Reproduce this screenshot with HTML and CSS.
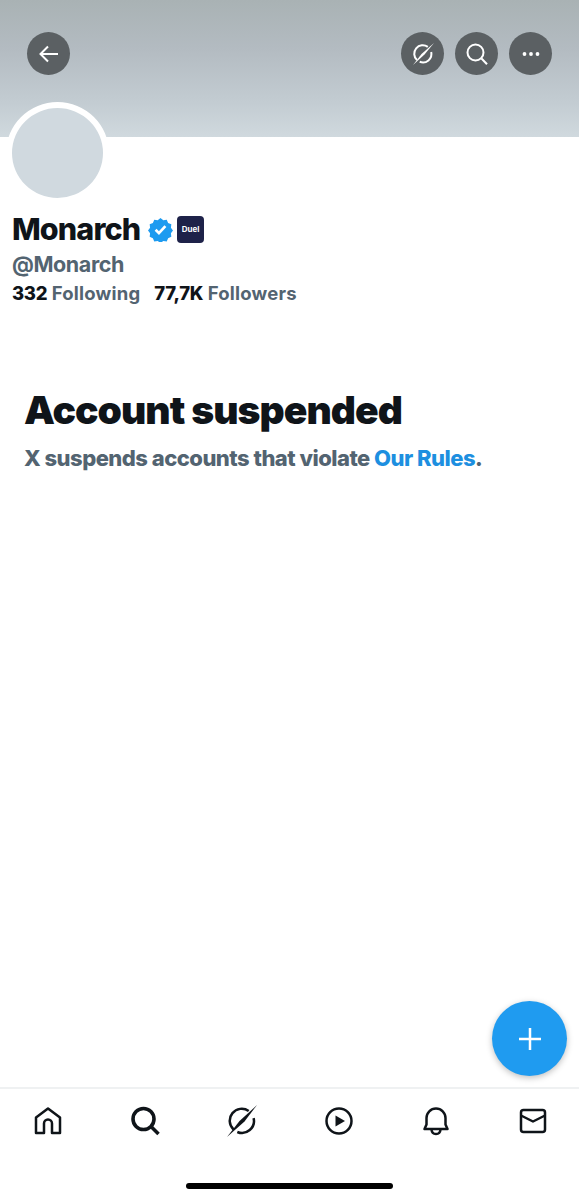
FILE: index.html
```html
<!DOCTYPE html>
<html lang="en">
<head>
<meta charset="utf-8">
<title>Monarch</title>
<link rel="stylesheet" href="styles.css">
</head>
<body>
<div class="page">
  <header class="banner">
    <button class="round" aria-label="Back">
      <svg width="24" height="24" viewBox="0 0 24 24" class="stroke-white"><path d="M21 12H4M11 4.500L3.500 12l7.500 7.500"/></svg>
    </button>
    <div class="actions">
      <button class="round" aria-label="Grok">
        <svg width="26" height="26" viewBox="0 0 26 26" class="stroke-white"><path d="M17.800 5.900A8.500 8.500 0 0 0 7 19M9.700 20.800A8.500 8.500 0 0 0 21.200 11"/><path class="slash" d="M3 24 11.500 13 24 2 14.500 13.500z"/></svg>
      </button>
      <button class="round" aria-label="Search">
        <svg width="24" height="24" viewBox="0 0 24 24" class="stroke-white"><circle cx="10.500" cy="10.500" r="8"/><path d="m16.500 16.500 5.500 5.800"/></svg>
      </button>
      <button class="round" aria-label="More">
        <svg width="24" height="24" viewBox="0 0 24 24" class="fill-white"><circle cx="5.500" cy="12" r="1.900"/><circle cx="12" cy="12" r="1.900"/><circle cx="18.500" cy="12" r="1.900"/></svg>
      </button>
    </div>
  </header>

  <main class="content">
    <div class="avatar"></div>
    <div class="name-row">
      <h1 class="name">Monarch</h1>
      <svg class="verified" width="25" height="25" viewBox="0 0 24 24"><path class="badge-fill" d="M12 1l2.700 2 3.300-.4 1.300 3.100 3.100 1.300-.4 3.300 2 2.700-2 2.700.4 3.300-3.100 1.300-1.300 3.100-3.300-.4-2.700 2-2.700-2-3.300.4-1.300-3.100-3.100-1.300.4-3.300-2-2.700 2-2.700-.4-3.300 3.100-1.300L6 2.600l3.300.4z"/><path class="badge-check" d="M7.300 12.300l3.200 3.200 6.200-6.700"/></svg>
      <span class="affiliate">Duel</span>
    </div>
    <div class="handle">@Monarch</div>
    <div class="stats">
      <span class="stat"><b>332</b> Following</span>
      <span class="stat"><b>77,7K</b> Followers</span>
    </div>
    <section class="notice">
      <h2 class="notice-title">Account suspended</h2>
      <p class="notice-text">X suspends accounts that violate <a class="rules" href="#">Our Rules</a>.</p>
    </section>
  </main>

  <button class="fab" aria-label="Compose">
    <svg width="28" height="28" viewBox="0 0 28 28" class="stroke-white"><path d="M14 3v22M3 14h22"/></svg>
  </button>

  <nav class="tabs">
    <svg width="32" height="32" viewBox="0 0 32 32" class="stroke-dark"><path d="M4 28V12.500L16 3.500l12 9V28h-8v-9.500a4 4 0 0 0-8 0V28z"/></svg>
    <svg width="32" height="32" viewBox="0 0 32 32" class="stroke-dark heavy"><circle cx="14.500" cy="14" r="10.500"/><path d="m22 21.500 7.500 7.500"/></svg>
    <svg width="34" height="34" viewBox="0 0 34 34" class="stroke-dark grok"><path d="M23.700 7A12 12 0 0 0 8.500 25.500M12.300 28A12 12 0 0 0 28.600 14.100"/><path class="slash-dark" d="M2 33 14.500 17 32 1 19.500 17.500z"/></svg>
    <svg width="32" height="32" viewBox="0 0 32 32" class="stroke-dark"><circle cx="16" cy="16" r="12.500"/><path class="fill-dark" d="M12.500 10.500 22 16l-9.500 5.500z"/></svg>
    <svg width="32" height="32" viewBox="0 0 32 32" class="stroke-dark"><path d="M4.500 24h23l-2-4.500V13a9.500 9.500 0 0 0-19 0v6.500z"/><path d="M11.500 24.500c.5 6 8.500 6 9 0"/></svg>
    <svg width="32" height="32" viewBox="0 0 32 32" class="stroke-dark"><rect x="4" y="5" width="24" height="22" rx="2.500"/><path d="M4 10.500 16 16.500l12-6"/></svg>
  </nav>
  <div class="home-bar"><span class="home-pill"></span></div>
</div>
</body>
</html>
```
FILE: styles.css
```css
* { box-sizing: border-box; }
html, body { margin: 0; padding: 0; background: #fff; }
body { font-family: Inter, "Liberation Sans", sans-serif; color: #0f1419; }
.page { position: relative; width: 579px; height: 1200px; display: flex; flex-direction: column; overflow: hidden; }

.banner {
  height: 137px; flex: none; padding: 32px 27px 0; display: flex; justify-content: space-between; align-items: flex-start;
  background: linear-gradient(180deg, #a9b2b4 0%, #b3bbc1 35%, #c3ccd2 75%, #d0d9de 100%);
}
.actions { display: flex; gap: 11px; }
.round {
  width: 43px; height: 43px; border: 0; padding: 0; border-radius: 50%; background: #5b6063;
  display: flex; align-items: center; justify-content: center;
}
svg { fill: none; display: block; }
.stroke-white { stroke: #fff; stroke-width: 2; stroke-linejoin: miter; }
.fill-white { fill: #fff; }
.slash { fill: #fff; stroke: none; }

.content { flex: 1; padding: 0 12px; }
.avatar {
  width: 103px; height: 102px; margin: -35px 0 0 -6px; border: 6px solid #fff; border-radius: 50%; background: #d0d9df; position: relative;
}
.name-row { display: flex; align-items: center; height: 38px; margin-top: 6px; }
.name { margin: 0; font-size: 30.500px; font-weight: 800; line-height: 38px; letter-spacing: -0.900px; }
.verified { margin-left: 8px; }
.badge-fill { fill: #1d9bf0; }
.badge-check { stroke: #fff; stroke-width: 2.600; }
.affiliate {
  width: 27px; height: 27px; margin-left: 4px; border-radius: 4px; background: #1e2249; color: #fff;
  font-size: 8px; font-weight: 700; display: flex; align-items: center; justify-content: center;
}
.handle { font-size: 21.500px; font-weight: 700; line-height: 28px; color: #536471; margin-top: 2px; letter-spacing: -0.400px; }
.stats { display: flex; gap: 14px; font-size: 18.500px; font-weight: 700; line-height: 24px; color: #536471; margin-top: 3px; letter-spacing: 0.200px; }
.stat b { color: #0f1419; font-weight: 800; letter-spacing: -0.300px; }

.notice { padding: 82px 0 0 12px; }
.notice-title { margin: 0; font-size: 39px; font-weight: 900; line-height: 46px; letter-spacing: -0.950px; }
.notice-text { margin: 11px 0 0; font-size: 22px; font-weight: 800; line-height: 28px; color: #536471; letter-spacing: -0.520px; }
.rules { color: #1d8fe0; text-decoration: none; }

.fab {
  position: absolute; left: 492px; top: 1001px; width: 75px; height: 75px; border: 0; padding: 0; border-radius: 50%;
  background: #1f9bf0; box-shadow: 0 2px 6px rgba(0, 0, 0, 0.25); display: flex; align-items: center; justify-content: center;
}
.fab .stroke-white { stroke-width: 2.500; }

.tabs {
  flex: none; height: 66px; border-top: 2px solid #eff1f2; padding-left: 32px; display: flex; gap: 65px; align-items: center;
}
.grok { margin: 0 -1px; }
.stroke-dark { stroke: #0f1419; stroke-width: 2.500; stroke-linejoin: round; }
.heavy { stroke-width: 3.600; }
.fill-dark { fill: #0f1419; stroke: none; }
.slash-dark { fill: #0f1419; stroke: none; }

.home-bar { flex: none; height: 47px; display: flex; justify-content: center; padding-top: 30px; }
.home-pill { width: 207px; height: 6px; border-radius: 3px; background: #000; }
```
